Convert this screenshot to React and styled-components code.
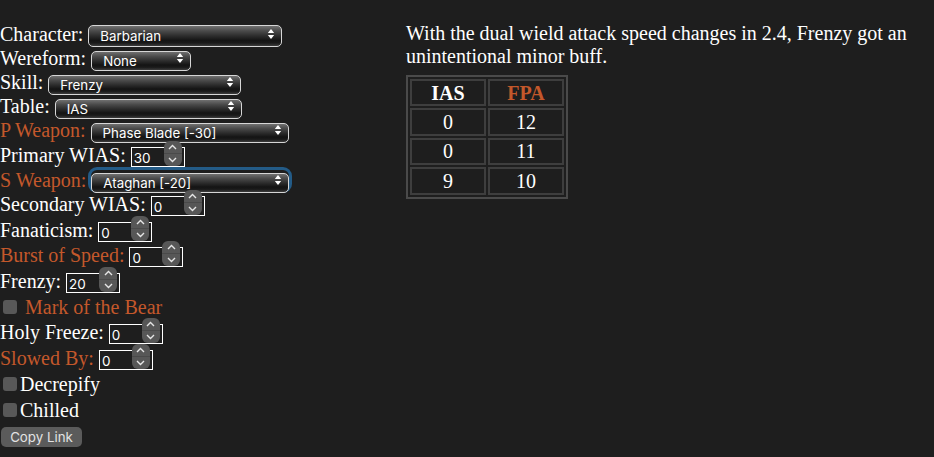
import React from "react";
import styled, { createGlobalStyle, css } from "styled-components";

const GlobalStyle = createGlobalStyle`
  html, body {
    margin: 0;
    padding: 0;
    background: #1e1e1e;
  }
  body {
    color: #ffffff;
    font-family: "Liberation Serif", "Times New Roman", serif;
    font-size: 20px;
  }
`;

const ORANGE = "#c4582b";
const UI_FONT = `"Inter", "Liberation Sans", Arial, sans-serif`;

const Page = styled.div`
  display: grid;
  grid-template-columns: 406px 1fr;
  padding-top: 22px;
  min-height: 435px;
`;

const LeftColumn = styled.div`
  display: flex;
  flex-direction: column;
`;

const RightColumn = styled.div`
  display: flex;
  flex-direction: column;
  align-items: flex-start;
  padding-right: 20px;
`;

const Row = styled.div`
  display: flex;
  align-items: center;
  gap: ${(p) => p.$gap ?? 5}px;
  height: ${(p) => p.$h}px;
  white-space: nowrap;
`;

const Label = styled.span`
  color: ${(p) => (p.$accent ? ORANGE : "#ffffff")};
  line-height: 1;
`;

const SelectWrap = styled.div`
  position: relative;
  width: ${(p) => p.$w}px;
  height: ${(p) => p.$h ?? 20}px;
  border-radius: 6px;
  ${(p) =>
    p.$focused &&
    css`
      box-shadow: 0 0 0 3px #235b87;
    `}
`;

const Select = styled.select`
  appearance: none;
  -webkit-appearance: none;
  box-sizing: border-box;
  width: 100%;
  height: 100%;
  margin: 0;
  border: 1px solid #d6d6d6;
  border-radius: 5px;
  background: linear-gradient(
    to bottom,
    #707070 0%,
    #4a4a4a 25%,
    #2c2c2c 50%,
    #141414 72%,
    #1a1a1a 85%,
    #3d3d3d 100%
  );
  color: #ffffff;
  font-family: ${UI_FONT};
  font-size: 13.3px;
  padding: 0 22px 0 11px;
  outline: none;
  cursor: default;
`;

const SelectArrows = styled.svg`
  position: absolute;
  right: 7px;
  top: 50%;
  transform: translateY(-50%);
  pointer-events: none;
`;

const NumberBox = styled.div`
  position: relative;
  width: 54px;
  height: 20px;
`;

const NumberInput = styled.input`
  appearance: textfield;
  -moz-appearance: textfield;
  box-sizing: border-box;
  width: 100%;
  height: 100%;
  margin: 0;
  border: 1px solid #ffffff;
  border-radius: 0;
  background: #1e1e1e;
  color: #ffffff;
  font-family: ${UI_FONT};
  font-size: 13.5px;
  padding: 2px 2px 0 2px;
  outline: none;
  &::-webkit-inner-spin-button,
  &::-webkit-outer-spin-button {
    -webkit-appearance: none;
    margin: 0;
  }
`;

const Spinner = styled.div`
  position: absolute;
  right: 3px;
  top: -4px;
  bottom: -1px;
  width: 18px;
  border-radius: 6px;
  background: #575757;
  display: flex;
  flex-direction: column;
  overflow: hidden;
`;

const SpinHalf = styled.div`
  flex: 1;
  display: flex;
  align-items: center;
  justify-content: center;
  border-top: ${(p) => (p.$bottom ? "1px solid #4a4a4a" : "none")};
`;

const Checkbox = styled.input`
  appearance: none;
  -webkit-appearance: none;
  width: 14px;
  height: 14px;
  margin: 0 0 0 3px;
  border-radius: 3px;
  background: #585858;
  border: none;
`;

const CopyButton = styled.button`
  margin: 4px 0 0 1px;
  width: 81px;
  height: 20px;
  border: none;
  border-radius: 5px;
  background: #5b5b5b;
  color: #e2e2e2;
  font-family: ${UI_FONT};
  font-size: 13.3px;
  padding: 0;
  align-self: flex-start;
`;

const Intro = styled.p`
  margin: 0;
  line-height: 23px;
`;

const StatsTable = styled.table`
  margin-top: 7px;
  border: 2px solid #4a4a4a;
  border-spacing: 2px;
  border-collapse: separate;
`;

const Cell = styled.td`
  box-sizing: border-box;
  width: 76px;
  height: ${(p) => (p.$head ? 27 : 27.5)}px;
  border: 2px solid #3e3e3e;
  text-align: center;
  padding: 0;
  line-height: 1;
  font-weight: ${(p) => (p.$head ? 700 : 400)};
  color: ${(p) => (p.$accent ? ORANGE : "#ffffff")};
`;

function Arrows() {
  return (
    <SelectArrows width="8" height="12" viewBox="0 0 8 12">
      <path d="M4 1 L7.2 5 L0.8 5 Z" fill="#ffffff" />
      <path d="M4 11 L7.2 7 L0.8 7 Z" fill="#ffffff" />
    </SelectArrows>
  );
}

function SelectField({ label, accent, width, value, height, focused, rowH = 24 }) {
  return (
    <Row $h={rowH}>
      <Label $accent={accent}>{label}</Label>
      <SelectWrap $w={width} $h={height} $focused={focused}>
        <Select defaultValue={value}>
          <option value={value}>{value}</option>
        </Select>
        <Arrows />
      </SelectWrap>
    </Row>
  );
}

function NumberField({ label, accent, value }) {
  return (
    <Row $h={25.5}>
      <Label $accent={accent}>{label}</Label>
      <NumberBox>
        <NumberInput type="number" defaultValue={value} />
        <Spinner>
          <SpinHalf>
            <svg width="9" height="6" viewBox="0 0 9 6">
              <path d="M1 5 L4.5 1.5 L8 5" stroke="#e6e6e6" strokeWidth="1.4" fill="none" />
            </svg>
          </SpinHalf>
          <SpinHalf $bottom>
            <svg width="9" height="6" viewBox="0 0 9 6">
              <path d="M1 1 L4.5 4.5 L8 1" stroke="#e6e6e6" strokeWidth="1.4" fill="none" />
            </svg>
          </SpinHalf>
        </Spinner>
      </NumberBox>
    </Row>
  );
}

function CheckField({ label, accent, gap }) {
  return (
    <Row $h={26} $gap={gap}>
      <Checkbox type="checkbox" />
      <Label $accent={accent}>{label}</Label>
    </Row>
  );
}

const rows = [
  ["IAS", "FPA", true],
  ["0", "12"],
  ["0", "11"],
  ["9", "10"],
];

export default function App() {
  return (
    <>
      <GlobalStyle />
      <Page>
        <LeftColumn>
          <SelectField label="Character:" width={194} height={22} value="Barbarian" />
          <SelectField label="Wereform:" width={100} value="None" />
          <SelectField label="Skill:" width={193} value="Frenzy" />
          <SelectField label="Table:" width={187} value="IAS" />
          <SelectField label="P Weapon:" accent width={198} value="Phase Blade [-30]" />
          <NumberField label="Primary WIAS:" value="30" />
          <SelectField label="S Weapon:" accent width={198} value="Ataghan [-20]" focused />
          <NumberField label="Secondary WIAS:" value="0" />
          <NumberField label="Fanaticism:" value="0" />
          <NumberField label="Burst of Speed:" accent value="0" />
          <NumberField label="Frenzy:" value="20" />
          <CheckField label="Mark of the Bear" accent gap={8} />
          <NumberField label="Holy Freeze:" value="0" />
          <NumberField label="Slowed By:" accent value="0" />
          <CheckField label="Decrepify" gap={3} />
          <CheckField label="Chilled" gap={3} />
          <CopyButton>Copy Link</CopyButton>
        </LeftColumn>
        <RightColumn>
          <Intro>
            With the dual wield attack speed changes in 2.4, Frenzy got an unintentional minor buff.
          </Intro>
          <StatsTable>
            <tbody>
              {rows.map(([a, b, head], i) => (
                <tr key={i}>
                  <Cell as={head ? "th" : "td"} $head={head}>{a}</Cell>
                  <Cell as={head ? "th" : "td"} $head={head} $accent={head}>{b}</Cell>
                </tr>
              ))}
            </tbody>
          </StatsTable>
        </RightColumn>
      </Page>
    </>
  );
}
